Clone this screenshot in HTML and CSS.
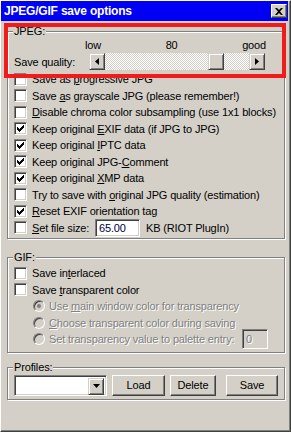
FILE: index.html
```html
<!DOCTYPE html>
<html lang="en">
<head>
    <meta charset="UTF-8">
    <title>JPEG/GIF save options</title>
    <link rel="stylesheet" href="styles.css">
</head>
<body>
    <div class="window">
        <div class="titlebar">
            <span class="title">JPEG/GIF save options</span>
            <span class="close-btn">
                <svg width="8" height="7" viewBox="0 0 8 7"><path d="M0 0h2l2 2 2-2h2L5 3.5 8 7H6L4 5 2 7H0l3-3.5z" fill="#000"/></svg>
            </span>
        </div>

        <div class="client">
            <fieldset class="group group-jpeg">
                <legend>JPEG:</legend>
                <div class="scale"><span>low</span><span>80</span><span>good</span></div>
                <div class="quality-row">
                    <span class="quality-label">Save quality:</span>
                    <div class="scrollbar">
                        <span class="sb-btn">
                            <svg width="4" height="7" viewBox="0 0 4 7"><path d="M4 0v7L0 3.5z" fill="#000"/></svg>
                        </span>
                        <span class="sb-track"><span class="sb-thumb" style="margin-left: 103px"></span></span>
                        <span class="sb-btn">
                            <svg width="4" height="7" viewBox="0 0 4 7"><path d="M0 0v7l4-3.5z" fill="#000"/></svg>
                        </span>
                    </div>
                </div>

                <div class="row"><span class="checkbox"></span><span>Save as <u>p</u>rogressive JPG</span></div>
                <div class="row"><span class="checkbox"></span><span>Save <u>a</u>s grayscale JPG (please remember!)</span></div>
                <div class="row"><span class="checkbox"></span><span><u>D</u>isable chroma color subsampling (use 1x1 blocks)</span></div>
                <div class="row"><span class="checkbox checked"></span><span>Keep original <u>E</u>XIF data (if JPG to JPG)</span></div>
                <div class="row"><span class="checkbox checked"></span><span>Keep original <u>I</u>PTC data</span></div>
                <div class="row"><span class="checkbox checked"></span><span>Keep original JPG-<u>C</u>omment</span></div>
                <div class="row"><span class="checkbox checked"></span><span>Keep original <u>X</u>MP data</span></div>
                <div class="row"><span class="checkbox"></span><span>Try to save with <u>o</u>riginal JPG quality (estimation)</span></div>
                <div class="row"><span class="checkbox checked"></span><span><u>R</u>eset EXIF orientation tag</span></div>
                <div class="row">
                    <span class="checkbox"></span><span class="size-label"><u>S</u>et file size:</span>
                    <span class="edit size-edit">65.00</span>
                    <span>KB (RIOT PlugIn)</span>
                </div>
            </fieldset>

            <fieldset class="group group-gif">
                <legend>GIF:</legend>
                <div class="row"><span class="checkbox"></span><span>Save in<u>t</u>erlaced</span></div>
                <div class="row"><span class="checkbox"></span><span>Save <u>t</u>ransparent color</span></div>
                <div class="row radio-row disabled"><span class="radio checked"></span><span>Use <u>m</u>ain window color for transparency</span></div>
                <div class="row radio-row disabled"><span class="radio"></span><span><u>C</u>hoose transparent color during saving</span></div>
                <div class="row radio-row disabled">
                    <span class="radio"></span><span>Set transparency value to palette entry:</span>
                    <span class="edit entry-edit">0</span>
                </div>
            </fieldset>

            <fieldset class="group">
                <legend>Profiles:</legend>
                <div class="profiles">
                    <span class="combo">
                        <span class="combo-btn">
                            <svg width="7" height="4" viewBox="0 0 7 4"><path d="M0 0h7L3.5 4z" fill="#000"/></svg>
                        </span>
                    </span>
                    <span class="button btn-load">Load</span>
                    <span class="button btn-delete">Delete</span>
                    <span class="button btn-save">Save</span>
                </div>
            </fieldset>
        </div>

        <div class="highlight"></div>
    </div>
</body>
</html>
```

FILE: styles.css
```css
body {
    margin: 0;
    padding: 0;
    background: #d4d0c8;
    font-family: 'Liberation Sans', Arial, sans-serif;
    font-size: 11px;
    letter-spacing: -0.15px;
    color: #000;
}

.window {
    position: relative;
    width: 291px;
    height: 432px;
    box-sizing: border-box;
    border-top: 1px solid #fff;
    border-left: 1px solid #fff;
    border-right: 1px solid #404040;
    border-bottom: 1px solid #404040;
    box-shadow: inset -1px -1px 0 #808080;
    background: #d4d0c8;
    overflow: hidden;
}

.titlebar {
    display: flex;
    align-items: center;
    justify-content: space-between;
    height: 20px;
    margin-right: 2px;
    padding: 0 1px 0 3px;
    background: #0000f4;
}

.title {
    color: #fff;
    font-weight: bold;
    font-size: 12px;
    letter-spacing: -0.2px;
}

.close-btn {
    display: flex;
    align-items: center;
    justify-content: center;
    width: 14px;
    height: 12px;
    background: #d4d0c8;
    border: 1px solid;
    border-color: #fff #404040 #404040 #fff;
    box-shadow: inset -1px -1px 0 #808080;
}

.client {
    padding: 4px 5px 0 6px;
}

/* group boxes */
.group {
    margin: 0 0 8px 0;
    padding: 0 6px 3px 6px;
    border: 1px solid #808080;
    box-shadow: inset 1px 1px 0 #fff, 1px 1px 0 #fff;
    min-width: 0;
}

.group-jpeg {
    margin-bottom: 12px;
    padding-bottom: 2px;
}

.group-gif {
    padding-top: 1px;
    padding-bottom: 4px;
}

.group legend {
    padding: 0 1px;
    margin-left: -1px;
    line-height: 13px;
    background: #d4d0c8;
}

/* quality slider */
.scale {
    display: flex;
    justify-content: space-between;
    height: 14px;
    line-height: 14px;
    margin-left: 71px;
    padding-right: 12px;
}

.quality-row {
    display: flex;
    align-items: center;
    height: 17px;
    margin: 1px 0 1px 0;
}

.quality-label {
    width: 75px;
}

.scrollbar {
    display: flex;
    width: 176px;
    height: 17px;
}

.sb-btn {
    display: flex;
    align-items: center;
    justify-content: center;
    width: 14px;
    height: 15px;
    background: #d4d0c8;
    border: 1px solid;
    border-color: #d4d0c8 #404040 #404040 #d4d0c8;
    box-shadow: inset 1px 1px 0 #fff, inset -1px -1px 0 #808080;
}

.sb-track {
    display: flex;
    flex: 1;
    background: repeating-conic-gradient(#fff 0 25%, #d4d0c8 0 50%) 0 0 / 2px 2px;
}

.sb-thumb {
    width: 14px;
    height: 15px;
    background: #d4d0c8;
    border: 1px solid;
    border-color: #d4d0c8 #404040 #404040 #d4d0c8;
    box-shadow: inset 1px 1px 0 #fff, inset -1px -1px 0 #808080;
}

/* rows */
.row {
    display: flex;
    align-items: center;
    height: 16.5px;
    white-space: nowrap;
}

.checkbox {
    flex: none;
    width: 11px;
    height: 11px;
    margin-right: 5px;
    background: #fff;
    border: 1px solid;
    border-color: #808080 #fff #fff #808080;
    box-shadow: inset 1px 1px 0 #404040, inset -1px -1px 0 #d4d0c8;
}

.checkbox.checked {
    background: #fff url("data:image/svg+xml,%3Csvg xmlns='http://www.w3.org/2000/svg' width='11' height='11' shape-rendering='crispEdges'%3E%3Cpath d='M2 4h1v1h1v1h1V5h1V4h1V3h1V2h1v3H8v1H7v1H6v1H5v1H4V8H3V7H2z' fill='%23000'/%3E%3C/svg%3E") no-repeat;
}

.size-label {
    width: 63px;
}

.edit {
    display: flex;
    align-items: center;
    box-sizing: border-box;
    padding: 0 3px;
    background: #fff;
    border: 1px solid;
    border-color: #808080 #fff #fff #808080;
    box-shadow: inset 1px 1px 0 #404040, inset -1px -1px 0 #d4d0c8;
}

.size-edit {
    width: 45px;
    height: 18px;
    margin-right: 6px;
    color: #000040;
}

.radio-row {
    padding-left: 19px;
}

.radio {
    flex: none;
    position: relative;
    width: 10px;
    height: 10px;
    margin-right: 4px;
    border-radius: 50%;
    border: 1px solid;
    border-color: #808080 #fff #fff #808080;
    box-shadow: inset 1px 1px 0 #404040;
    background: #d4d0c8;
}

.radio.checked::after {
    content: "";
    position: absolute;
    left: 3px;
    top: 3px;
    width: 4px;
    height: 4px;
    border-radius: 50%;
    background: #808080;
}

.disabled {
    color: #808080;
    text-shadow: 1px 1px 0 #fff;
}

.entry-edit {
    width: 26px;
    height: 20px;
    margin-left: auto;
    margin-right: 10px;
    background: #d4d0c8;
}

/* profiles */
.profiles {
    display: flex;
    align-items: center;
    height: 21px;
    margin-top: 1px;
}

.combo {
    display: flex;
    justify-content: flex-end;
    box-sizing: border-box;
    width: 93px;
    height: 21px;
    padding: 2px;
    background: #fff;
    border: 1px solid;
    border-color: #808080 #fff #fff #808080;
    box-shadow: inset 1px 1px 0 #404040, inset -1px -1px 0 #d4d0c8;
}

.combo-btn {
    display: flex;
    align-items: center;
    justify-content: center;
    width: 14px;
    height: 15px;
    background: #d4d0c8;
    border: 1px solid;
    border-color: #d4d0c8 #404040 #404040 #d4d0c8;
    box-shadow: inset 1px 1px 0 #fff, inset -1px -1px 0 #808080;
}

.button {
    display: flex;
    align-items: center;
    justify-content: center;
    box-sizing: border-box;
    height: 21px;
    border: 1px solid;
    border-color: #fff #404040 #404040 #fff;
    box-shadow: inset -1px -1px 0 #808080;
}

.btn-load {
    width: 53px;
    margin-left: 5px;
}

.btn-delete {
    width: 46px;
    margin-left: 5px;
}

.btn-save {
    width: 52px;
    margin-left: 10px;
}

/* red marker drawn over the quality setting */
.highlight {
    position: absolute;
    left: 3px;
    top: 22px;
    width: 282px;
    height: 55px;
    box-sizing: border-box;
    border: 4px solid #f01c1c;
}
```
